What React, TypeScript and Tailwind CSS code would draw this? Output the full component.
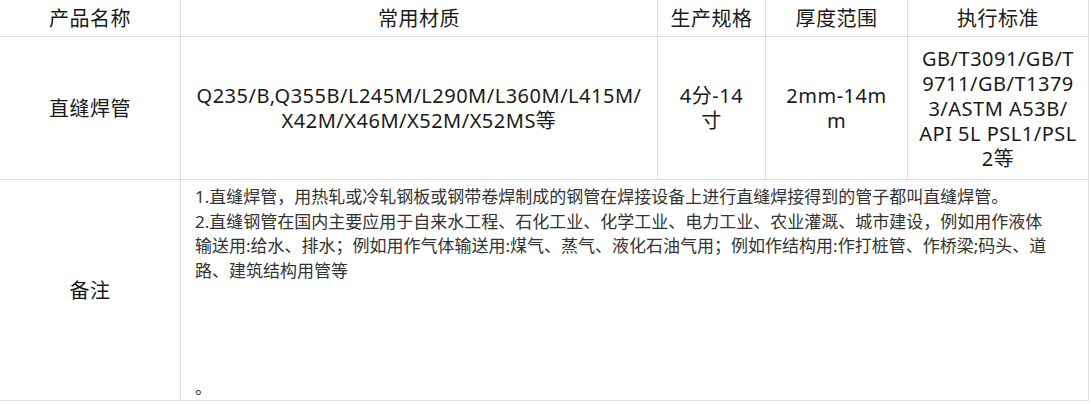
const headers = ["产品名称", "常用材质", "生产规格", "厚度范围", "执行标准"];

const cell =
  "flex flex-col items-center justify-center border-r border-b border-[#dddddd] text-center";

const notes = [
  "1.直缝焊管，用热轧或冷轧钢板或钢带卷焊制成的钢管在焊接设备上进行直缝焊接得到的管子都叫直缝焊管。",
  "2.直缝钢管在国内主要应用于自来水工程、石化工业、化学工业、电力工业、农业灌溉、城市建设，例如用作液体",
  "输送用:给水、排水；例如用作气体输送用:煤气、蒸气、液化石油气用；例如作结构用:作打桩管、作桥梁;码头、道",
  "路、建筑结构用管等",
];

function Lines({ items }: { items: string[] }) {
  return (
    <>
      {items.map((t) => (
        <span key={t} className="block whitespace-nowrap">
          {t}
        </span>
      ))}
    </>
  );
}

export default function App() {
  return (
    <div
      className="w-[1091px] bg-white text-[20px] leading-[25px] tracking-[0.5px] text-[#1a1a1a]"
      style={{ fontFamily: '"Noto Sans", "Noto Sans CJK SC", sans-serif' }}
    >
      <div className="grid w-[1089px] grid-cols-[181px_477px_108px_142px_181px] grid-rows-[37px_143px_221px]">
        {headers.map((h) => (
          <div key={h} className={cell}>
            {h}
          </div>
        ))}

        <div className={cell}>直缝焊管</div>
        <div className={cell}>
          <Lines items={["Q235/B,Q355B/L245M/L290M/L360M/L415M/", "X42M/X46M/X52M/X52MS等"]} />
        </div>
        <div className={cell}>
          <Lines items={["4分-14", "寸"]} />
        </div>
        <div className={cell}>
          <Lines items={["2mm-14m", "m"]} />
        </div>
        <div className={cell}>
          <Lines
            items={["GB/T3091/GB/T", "9711/GB/T1379", "3/ASTM A53B/", "API 5L PSL1/PSL", "2等"]}
          />
        </div>

        <div className={cell}>备注</div>
        <div className="col-span-4 flex flex-col justify-between border-r border-b border-[#dddddd] pt-[5px] pl-[14px] text-[17px] leading-[24.5px] tracking-normal text-[#333333]">
          <div>
            <Lines items={notes} />
          </div>
          <span className="block">。</span>
        </div>
      </div>
    </div>
  );
}
